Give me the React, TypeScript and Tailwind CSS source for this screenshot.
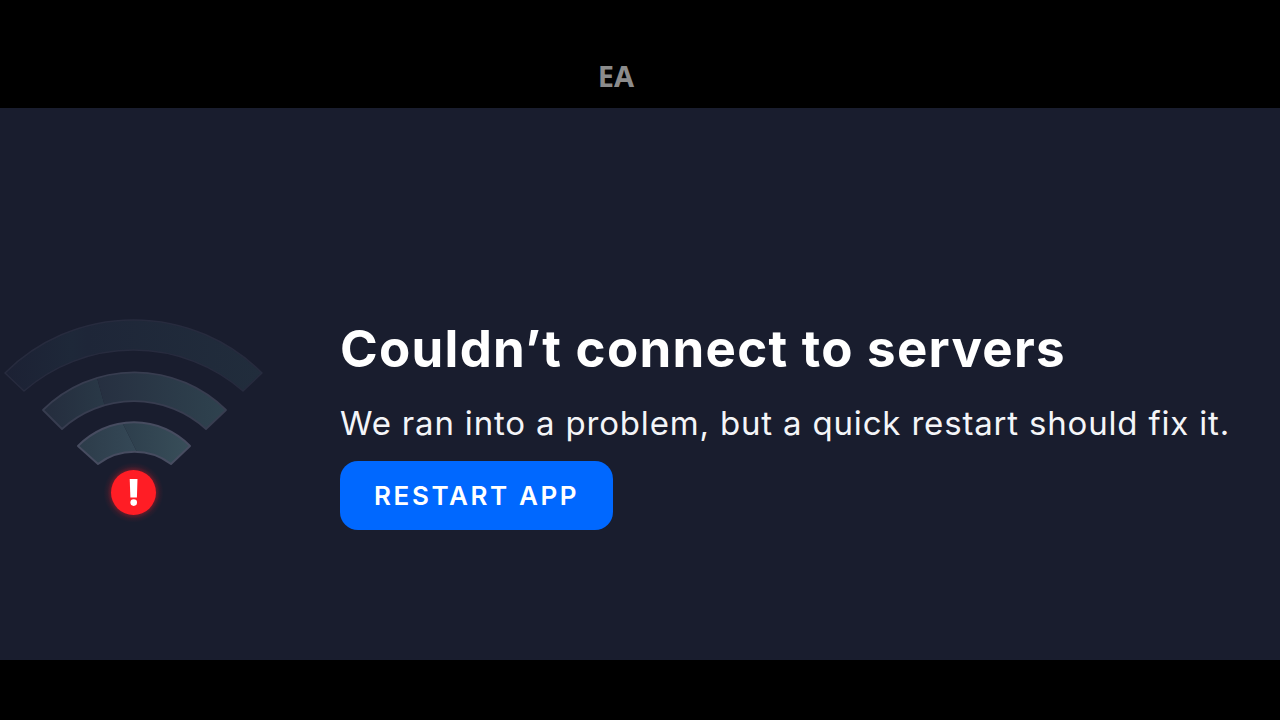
function NoConnectionIcon() {
  return (
    <svg
      viewBox="0 0 268 216"
      className="w-[268px] shrink-0"
      role="img"
      aria-label="No connection"
    >
      <defs>
        <linearGradient id="outer" x1="0" y1="0" x2="1" y2="0">
          <stop offset="0" stopColor="#1c2134" />
          <stop offset="0.26" stopColor="#1e2839" />
          <stop offset="0.32" stopColor="#1e2638" />
          <stop offset="1" stopColor="#212d3c" />
        </linearGradient>
        <linearGradient id="middleLeft" x1="0" y1="0" x2="1" y2="0">
          <stop offset="0" stopColor="#242c3d" />
          <stop offset="1" stopColor="#2a3a48" />
        </linearGradient>
        <linearGradient id="middleRight" x1="0" y1="0" x2="1" y2="0">
          <stop offset="0" stopColor="#262f40" />
          <stop offset="1" stopColor="#2f434f" />
        </linearGradient>
        <linearGradient id="innerLeft" x1="0" y1="0" x2="1" y2="0">
          <stop offset="0" stopColor="#2c3b49" />
          <stop offset="1" stopColor="#364a58" />
        </linearGradient>
        <linearGradient id="innerRight" x1="0" y1="0" x2="1" y2="0">
          <stop offset="0" stopColor="#2d3e4c" />
          <stop offset="1" stopColor="#394f5a" />
        </linearGradient>
        <clipPath id="middleClip">
          <path d="M43 98A130 130 0 0 1 226 98L206 117A107 107 0 0 0 62 117Z" />
        </clipPath>
        <clipPath id="innerClip">
          <path d="M78 134A78 78 0 0 1 190 134L171 152A61 61 0 0 0 98 152Z" />
        </clipPath>
        <radialGradient id="glow">
          <stop offset="0.75" stopColor="#ff1a24" stopOpacity="0.3" />
          <stop offset="0.87" stopColor="#ff1a24" stopOpacity="0.08" />
          <stop offset="1" stopColor="#ff1a24" stopOpacity="0" />
        </radialGradient>
      </defs>

      <path
        d="M5 61A182 182 0 0 1 262 61L243 79A167 167 0 0 0 24 79Z"
        fill="url(#outer)"
        stroke="#272b3e"
        strokeWidth="1.5"
        strokeLinejoin="round"
      />

      <g clipPath="url(#middleClip)">
        <path d="M40 55H94L112 120H40Z" fill="url(#middleLeft)" />
        <path d="M94 55H230V120H112Z" fill="url(#middleRight)" />
      </g>
      <path
        d="M43 98A130 130 0 0 1 226 98L206 117A107 107 0 0 0 62 117Z"
        fill="none"
        stroke="#383d50"
        strokeWidth="1.8"
        strokeLinejoin="round"
      />

      <g clipPath="url(#innerClip)">
        <path d="M75 108H121L145 156H75Z" fill="url(#innerLeft)" />
        <path d="M121 108H194V156H145Z" fill="url(#innerRight)" />
      </g>
      <path
        d="M78 134A78 78 0 0 1 190 134L171 152A61 61 0 0 0 98 152Z"
        fill="none"
        stroke="#474c60"
        strokeWidth="2"
        strokeLinejoin="round"
      />

      <circle cx="133.5" cy="180.5" r="30" fill="url(#glow)" />
      <circle cx="133.5" cy="180.5" r="22.5" fill="#ff1d25" />
      <path d="M129.7 167H137.5L136.9 185.5H130.4Z" fill="#fff" />
      <circle cx="133.7" cy="190.6" r="3.3" fill="#fff" />
    </svg>
  );
}

export default function App() {
  return (
    <div className="flex min-h-screen flex-col bg-black font-['Inter',sans-serif] text-white">
      <header className="flex h-[108px] items-end justify-center pr-12 pb-3">
        <span className="font-['Noto_Sans',sans-serif] text-[29px] leading-10 font-bold text-[#8c8c8c]">
          EA
        </span>
      </header>

      <main className="flex flex-1 items-center gap-[72px] bg-[#191d2e] pt-[72px]">
        <NoConnectionIcon />
        <div>
          <h1 className="text-[51px] leading-[76px] font-bold tracking-wide">
            Couldn’t connect to servers
          </h1>
          <p className="mt-3.5 text-[33px] leading-[44px] tracking-wide text-[#f4f5f8]">
            We ran into a problem, but a quick restart should fix it.
          </p>
          <button
            type="button"
            className="mt-4 h-[69px] rounded-[18px] bg-[#0068ff] px-[34px] text-[26px] font-semibold tracking-widest"
          >
            RESTART APP
          </button>
        </div>
      </main>

      <footer className="h-[60px]" />
    </div>
  );
}
